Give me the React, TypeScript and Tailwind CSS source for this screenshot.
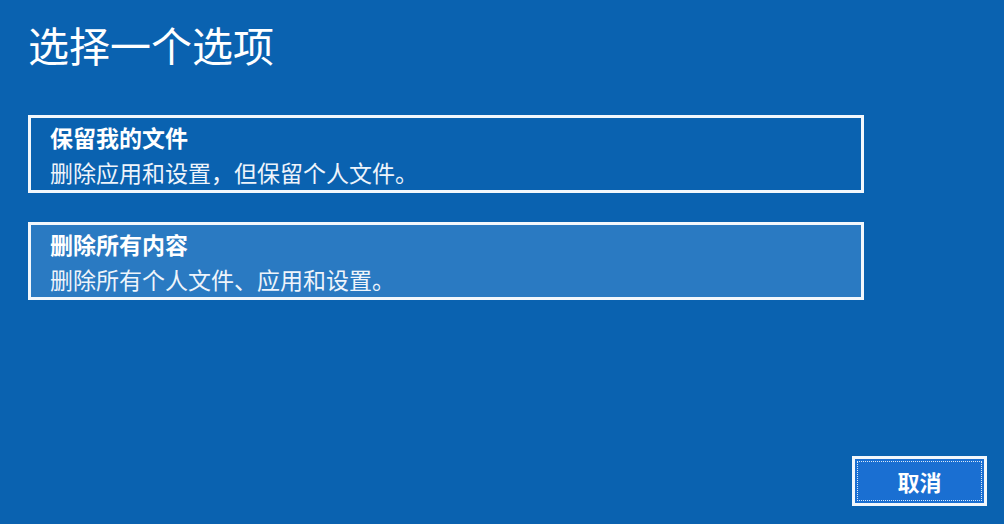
import React from 'react';

const font = { fontFamily: '"Noto Sans CJK SC", "Noto Sans", sans-serif' };

type OptionProps = {
  title: string;
  desc: string;
  active?: boolean;
};

function OptionCard({ title, desc, active }: OptionProps) {
  return (
    <div
      className={
        'w-[836px] h-[78px] border-[3px] border-[#f2f7fc] pl-[19px] pt-[4px] text-white ' +
        (active ? 'bg-[#2a7ac2]' : 'bg-[#0a62b0]')
      }
    >
      <div className="text-[23px] leading-[30px] font-bold">{title}</div>
      <div className="mt-[4px] text-[23px] leading-[32px] text-[#eef4fb]">{desc}</div>
    </div>
  );
}

export default function App() {
  return (
    <div className="w-[1004px] h-[524px] bg-[#0a62b0] flex flex-col overflow-hidden" style={font}>
      <div className="pl-[28px] pt-[20px]">
        <h1 className="text-[41px] leading-[48px] font-normal text-white">选择一个选项</h1>
      </div>

      <div className="pl-[28px] mt-[47px] flex flex-col gap-[29px]">
        <OptionCard title="保留我的文件" desc="删除应用和设置，但保留个人文件。" />
        <OptionCard title="删除所有内容" desc="删除所有个人文件、应用和设置。" active />
      </div>

      <div className="mt-auto flex justify-end pr-[17px] pb-[18px]">
        <button className="w-[135px] h-[50px] border-[3px] border-[#f2f7fc] bg-[#1a6fd2] p-[2px]">
          <div className="w-full h-full border border-dotted border-[#dbe8f7] flex items-center justify-center text-[22px] font-bold text-white">
            取消
          </div>
        </button>
      </div>
    </div>
  );
}
